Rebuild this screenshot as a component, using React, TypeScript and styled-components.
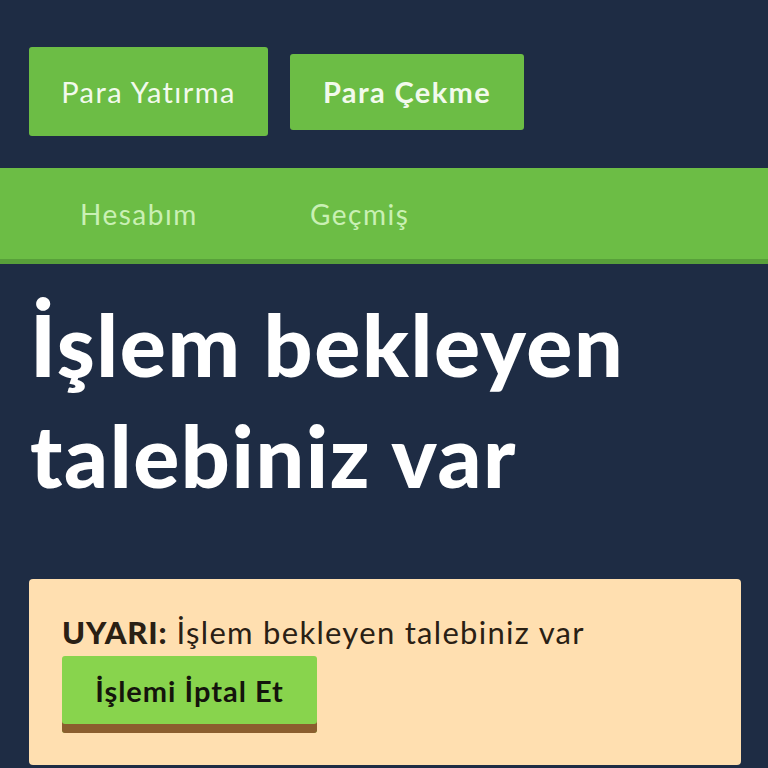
import React from "react";
import styled, { createGlobalStyle } from "styled-components";

const GlobalStyle = createGlobalStyle`
  html, body {
    margin: 0;
    padding: 0;
    background: #1e2c44;
    font-family: Lato, "Open Sans", "Noto Sans", sans-serif;
  }
`;

const Page = styled.div`
  width: 768px;
  min-height: 768px;
  background: #1e2c44;
  overflow: hidden;
`;

const TopBar = styled.div`
  display: flex;
  align-items: center;
  gap: 22px;
  height: 168px;
  padding: 15px 29px 0;
  box-sizing: border-box;
`;

const ActionButton = styled.button<{ $w: number; $h: number }>`
  width: ${(p) => p.$w}px;
  height: ${(p) => p.$h}px;
  border: none;
  border-radius: 3px;
  background: #6cbd45;
  color: #f2faec;
  font-family: inherit;
  font-size: 29px;
  letter-spacing: 1.4px;
  font-weight: ${(p) => (p.$h > 80 ? 400 : 700)};
  cursor: pointer;
`;

const NavBar = styled.nav`
  display: flex;
  align-items: center;
  height: 91px;
  background: #6cbd45;
  border-bottom: 5px solid #58a03a;
  padding-left: 80px;
`;

const NavLink = styled.a`
  min-width: 230px;
  color: #c9f0b4;
  font-size: 28px;
  letter-spacing: 1.5px;
  font-weight: 400;
  text-decoration: none;
`;

const Heading = styled.h1`
  margin: 24px 0 0 30px;
  color: #ffffff;
  font-size: 86px;
  font-weight: 900;
  line-height: 111px;
  letter-spacing: 1.6px;
`;

const AlertBox = styled.div`
  margin: 69px 27px 0 29px;
  padding: 33px 33px 30px;
  background: #ffdfb0;
  border-radius: 4px;
  min-height: 186px;
  box-sizing: border-box;
`;

const AlertText = styled.p`
  margin: 0;
  color: #2a2014;
  font-size: 31px;
  letter-spacing: 1.3px;
  line-height: 40px;
  font-weight: 400;
`;

const AlertLabel = styled.strong`
  font-weight: 900;
  letter-spacing: 0.8px;
`;

const CancelButton = styled.button`
  margin-top: 4px;
  width: 255px;
  height: 77px;
  border: none;
  border-radius: 3px;
  background: #88d44d;
  box-shadow: inset 0 -9px 0 #8b5e2e;
  padding-bottom: 9px;
  color: #14140c;
  font-family: inherit;
  font-size: 29px;
  letter-spacing: 1px;
  font-weight: 700;
  cursor: pointer;
`;

export default function App() {
  return (
    <Page>
      <GlobalStyle />
      <TopBar>
        <ActionButton $w={239} $h={89}>
          Para Yatırma
        </ActionButton>
        <ActionButton $w={234} $h={76}>
          Para Çekme
        </ActionButton>
      </TopBar>
      <NavBar>
        <NavLink href="#">Hesabım</NavLink>
        <NavLink href="#">Geçmiş</NavLink>
      </NavBar>
      <Heading>
        İşlem bekleyen
        <br />
        talebiniz var
      </Heading>
      <AlertBox>
        <AlertText>
          <AlertLabel>UYARI:</AlertLabel> İşlem bekleyen talebiniz var
        </AlertText>
        <CancelButton>İşlemi İptal Et</CancelButton>
      </AlertBox>
    </Page>
  );
}
